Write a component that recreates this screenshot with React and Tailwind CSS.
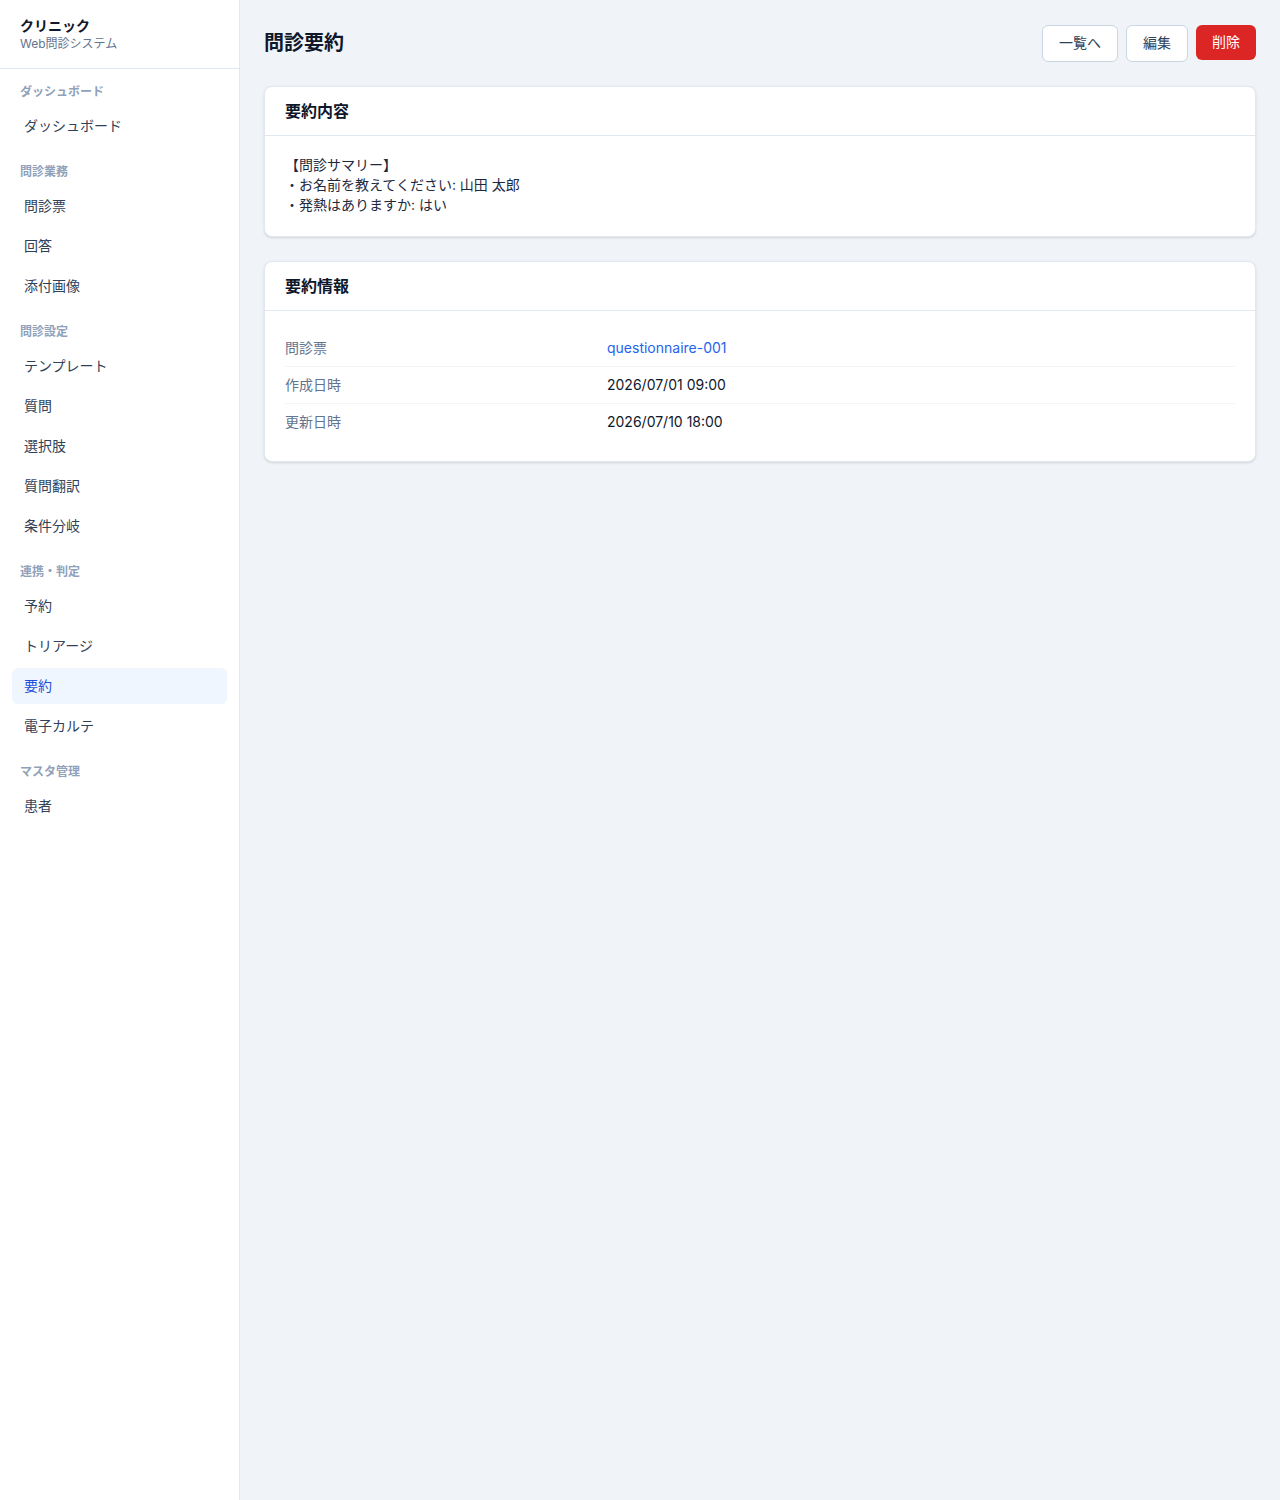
const nav = [
  { label: "ダッシュボード", items: ["ダッシュボード"] },
  { label: "問診業務", items: ["問診票", "回答", "添付画像"] },
  { label: "問診設定", items: ["テンプレート", "質問", "選択肢", "質問翻訳", "条件分岐"] },
  { label: "連携・判定", items: ["予約", "トリアージ", "要約", "電子カルテ"] },
  { label: "マスタ管理", items: ["患者"] },
];

const info = [
  { label: "問診票", value: "questionnaire-001", link: true },
  { label: "作成日時", value: "2026/07/01 09:00" },
  { label: "更新日時", value: "2026/07/10 18:00" },
];

const Sidebar = () => (
  <aside className="w-[240px] shrink-0 border-r border-slate-200 bg-white">
    {/* Brand */}
    <div className="border-b border-slate-200 px-5 pt-4 pb-4">
      <p className="text-sm font-bold leading-5 text-slate-900">クリニック</p>
      <p className="text-xs leading-4 text-slate-500">Web問診システム</p>
    </div>

    <nav className="px-3 pt-[15px]">
      {nav.map((section, i) => (
        <div key={section.label} className={i > 0 ? "mt-5" : ""}>
          <p className="mb-2 px-2 text-xs font-bold leading-4 text-slate-400">
            {section.label}
          </p>
          <ul className="space-y-1">
            {section.items.map((item) => {
              const active = item === "要約";
              return (
                <li
                  key={item}
                  className={`flex h-9 items-center rounded-md px-3 text-sm ${
                    active ? "bg-[#eff6ff] text-[#1d4ed8]" : "text-slate-700"
                  }`}
                >
                  {item}
                </li>
              );
            })}
          </ul>
        </div>
      ))}
    </nav>
  </aside>
);

const Card = ({ title, children }) => (
  <section className="rounded-lg border border-slate-200 bg-white shadow-sm">
    <div className="flex h-[49px] items-center border-b border-slate-200 px-5">
      <h2 className="text-base font-bold text-slate-900">{title}</h2>
    </div>
    <div className="px-5 pt-[19px] pb-[21px]">{children}</div>
  </section>
);

export default function App() {
  return (
    <div
      className="flex min-h-screen bg-[#f0f4f9]"
      style={{ fontFamily: '"Inter", "Noto Sans CJK JP", sans-serif' }}
    >
      <Sidebar />

      <main className="flex-1 p-6">
        {/* Page header */}
        <div className="flex h-[38px] items-center justify-between">
          <h1 className="text-xl font-bold text-slate-900">問診要約</h1>
          <div className="flex gap-2">
            <button className="h-[37px] rounded-md border border-slate-300 bg-white px-4 text-sm text-slate-700">
              一覧へ
            </button>
            <button className="h-[37px] rounded-md border border-slate-300 bg-white px-4 text-sm text-slate-700">
              編集
            </button>
            <button className="h-[35px] rounded-md bg-[#dc2626] px-4 text-sm text-white">
              削除
            </button>
          </div>
        </div>

        <div className="mt-6 space-y-6">
          <Card title="要約内容">
            <p className="whitespace-pre-wrap text-sm leading-5 text-slate-800">
              {"【問診サマリー】\n・お名前を教えてください: 山田 太郎\n・発熱はありますか: はい"}
            </p>
          </Card>

          <Card title="要約情報">
            <dl className="divide-y divide-slate-100">
              {info.map((row) => (
                <div key={row.label} className="grid grid-cols-3 gap-4 py-2 text-sm leading-5">
                  <dt className="text-slate-500">{row.label}</dt>
                  <dd className={`col-span-2 ${row.link ? "text-[#2563eb]" : "text-slate-900"}`}>
                    {row.value}
                  </dd>
                </div>
              ))}
            </dl>
          </Card>
        </div>
      </main>
    </div>
  );
}
